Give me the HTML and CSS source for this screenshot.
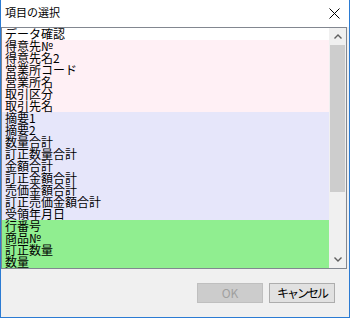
FILE: index.html
```html
<!DOCTYPE html>
<html lang="ja">
<head>
<meta charset="utf-8">
<link rel="stylesheet" href="styles.css">
</head>
<body>
<div class="win">
  <div class="titlebar">
    <span class="title">項目の選択</span>
    <svg class="close" width="11" height="11" viewBox="0 0 11 11"><path d="M0.5 0.5 L10.5 10.5 M10.5 0.5 L0.5 10.5" stroke="#000" stroke-width="1" fill="none"/></svg>
  </div>
  <div class="list">
    <div class="rows">
      <div class="row">データ確認</div>
      <div class="row pink">得意先№</div>
      <div class="row pink">得意先名2</div>
      <div class="row pink">営業所コード</div>
      <div class="row pink">営業所名</div>
      <div class="row pink">取引区分</div>
      <div class="row pink">取引先名</div>
      <div class="row lav">摘要1</div>
      <div class="row lav">摘要2</div>
      <div class="row lav">数量合計</div>
      <div class="row lav">訂正数量合計</div>
      <div class="row lav">金額合計</div>
      <div class="row lav">訂正金額合計</div>
      <div class="row lav">売価金額合計</div>
      <div class="row lav">訂正売価金額合計</div>
      <div class="row lav">受領年月日</div>
      <div class="row green">行番号</div>
      <div class="row green">商品№</div>
      <div class="row green">訂正数量</div>
      <div class="row green">数量</div>
    </div>
    <div class="sb">
      <div class="sb-btn"><svg width="8" height="5" viewBox="0 0 8 5"><path d="M0.5 4.5 L4 1 L7.5 4.5" stroke="#606060" stroke-width="1.4" fill="none"/></svg></div>
      <div class="sb-track"><div class="thumb"></div></div>
      <div class="sb-btn"><svg width="8" height="5" viewBox="0 0 8 5"><path d="M0.5 0.5 L4 4 L7.5 0.5" stroke="#606060" stroke-width="1.4" fill="none"/></svg></div>
    </div>
  </div>
  <div class="footer">
    <button class="btn ok" disabled>OK</button>
    <button class="btn cancel">キャンセル</button>
  </div>
</div>
</body>
</html>
```
FILE: styles.css
```css
html, body {
  margin: 0;
  padding: 0;
  background: #f0f0f0;
}
.win {
  width: 350px;
  height: 318px;
  box-sizing: border-box;
  border: 1px solid #2b7bd3;
  border-top: none;
  background: #f0f0f0;
  display: flex;
  flex-direction: column;
  font-family: "Noto Sans CJK JP", "Noto Sans", sans-serif;
}
.titlebar {
  height: 27px;
  flex: none;
  background: #ffffff;
  display: flex;
  align-items: flex-start;
}
.title {
  font-size: 11px;
  line-height: 14px;
  color: #000;
  margin-left: 4px;
  margin-top: 5px;
}
.close {
  margin-left: auto;
  margin-right: 9px;
  margin-top: 8px;
}
.list {
  height: 242px;
  flex: none;
  box-sizing: border-box;
  border: 1px solid #828790;
  margin-right: 2px;
  background: #ffffff;
  display: flex;
}
.rows {
  flex: 1;
}
.row {
  height: 12px;
  line-height: 12px;
  font-size: 12px;
  padding-left: 3px;
  color: #000;
  white-space: nowrap;
}
.pink { background: #fff0f5; }
.lav { background: #e6e6fa; }
.green { background: #90ee90; }
.sb {
  width: 17px;
  flex: none;
  background: #f0f0f0;
  display: flex;
  flex-direction: column;
}
.sb-btn {
  height: 17px;
  flex: none;
  display: flex;
  align-items: center;
  justify-content: center;
}
.sb-track {
  flex: 1;
  display: flex;
  flex-direction: column;
}
.thumb {
  height: 147px;
  margin: 0 1px;
  background: #cdcdcd;
}
.footer {
  flex: 1;
  display: flex;
  justify-content: flex-end;
  align-items: flex-start;
  padding-top: 14px;
  padding-right: 14px;
  gap: 6px;
}
.btn {
  width: 66px;
  height: 20px;
  box-sizing: border-box;
  margin: 0;
  padding: 0;
  font-family: "Noto Sans CJK JP", "Noto Sans", sans-serif;
  font-size: 12px;
  line-height: 18px;
}
.ok {
  background: #cccccc;
  border: 1px solid #bfbfbf;
  color: #a0a0a0;
}
.cancel {
  background: #e1e1e1;
  border: 1px solid #adadad;
  color: #000;
  letter-spacing: -2px;
}
```
